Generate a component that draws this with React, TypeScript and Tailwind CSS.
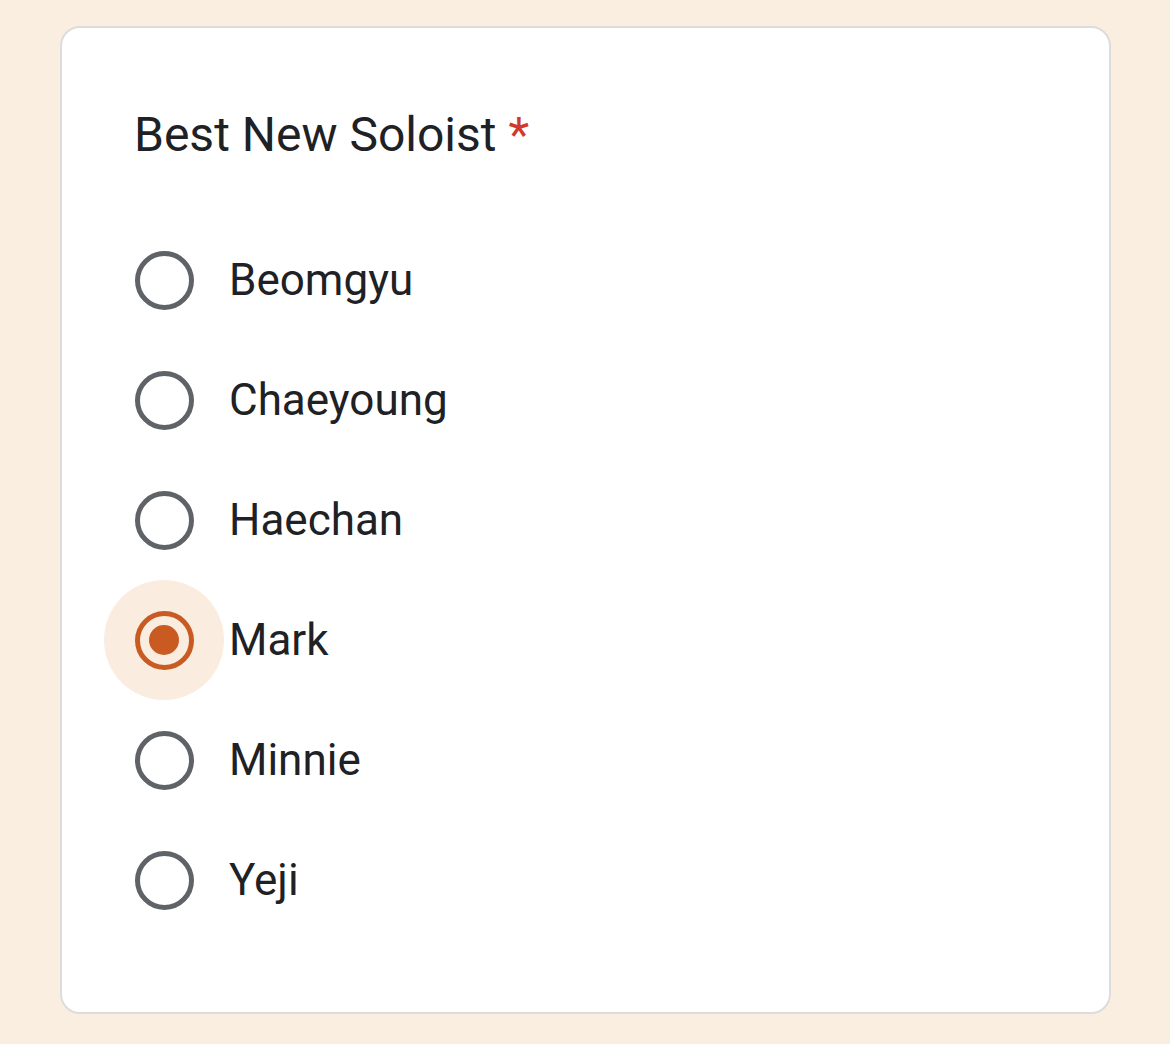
const options = ["Beomgyu", "Chaeyoung", "Haechan", "Mark", "Minnie", "Yeji"];
const selected = "Mark";

function Radio({ checked }: { checked: boolean }) {
  return (
    <div
      className={`w-[120px] h-[120px] shrink-0 rounded-full flex items-center justify-center ${
        checked ? "bg-[#faeddf]" : ""
      }`}
    >
      <div
        className={`w-[59px] h-[59px] rounded-full border-[5.5px] flex items-center justify-center ${
          checked ? "border-[#c85a22]" : "border-[#5f6368]"
        }`}
      >
        {checked && <div className="w-[30px] h-[30px] rounded-full bg-[#c85a22]" />}
      </div>
    </div>
  );
}

export default function App() {
  return (
    <div
      className="min-h-[1044px] w-full bg-[#faeee0] pt-[26px] pl-[60px]"
      style={{ fontFamily: "Roboto, 'Liberation Sans', sans-serif" }}
    >
      <div className="w-[1051px] h-[988px] bg-white border-2 border-[#dcdcdc] rounded-[20px] pt-[77px] pl-[72px]">
        <h1 className="text-[48px] leading-[60px] text-[#202124] font-normal">
          Best New Soloist <span className="text-[#cf3a2b]">*</span>
        </h1>
        <div className="mt-[55px] flex flex-col -ml-[30px]">
          {options.map((o) => (
            <div key={o} className="flex items-center h-[120px]">
              <Radio checked={o === selected} />
              <span className="ml-[5px] text-[44px] leading-[50px] text-[#202124]">{o}</span>
            </div>
          ))}
        </div>
      </div>
    </div>
  );
}
